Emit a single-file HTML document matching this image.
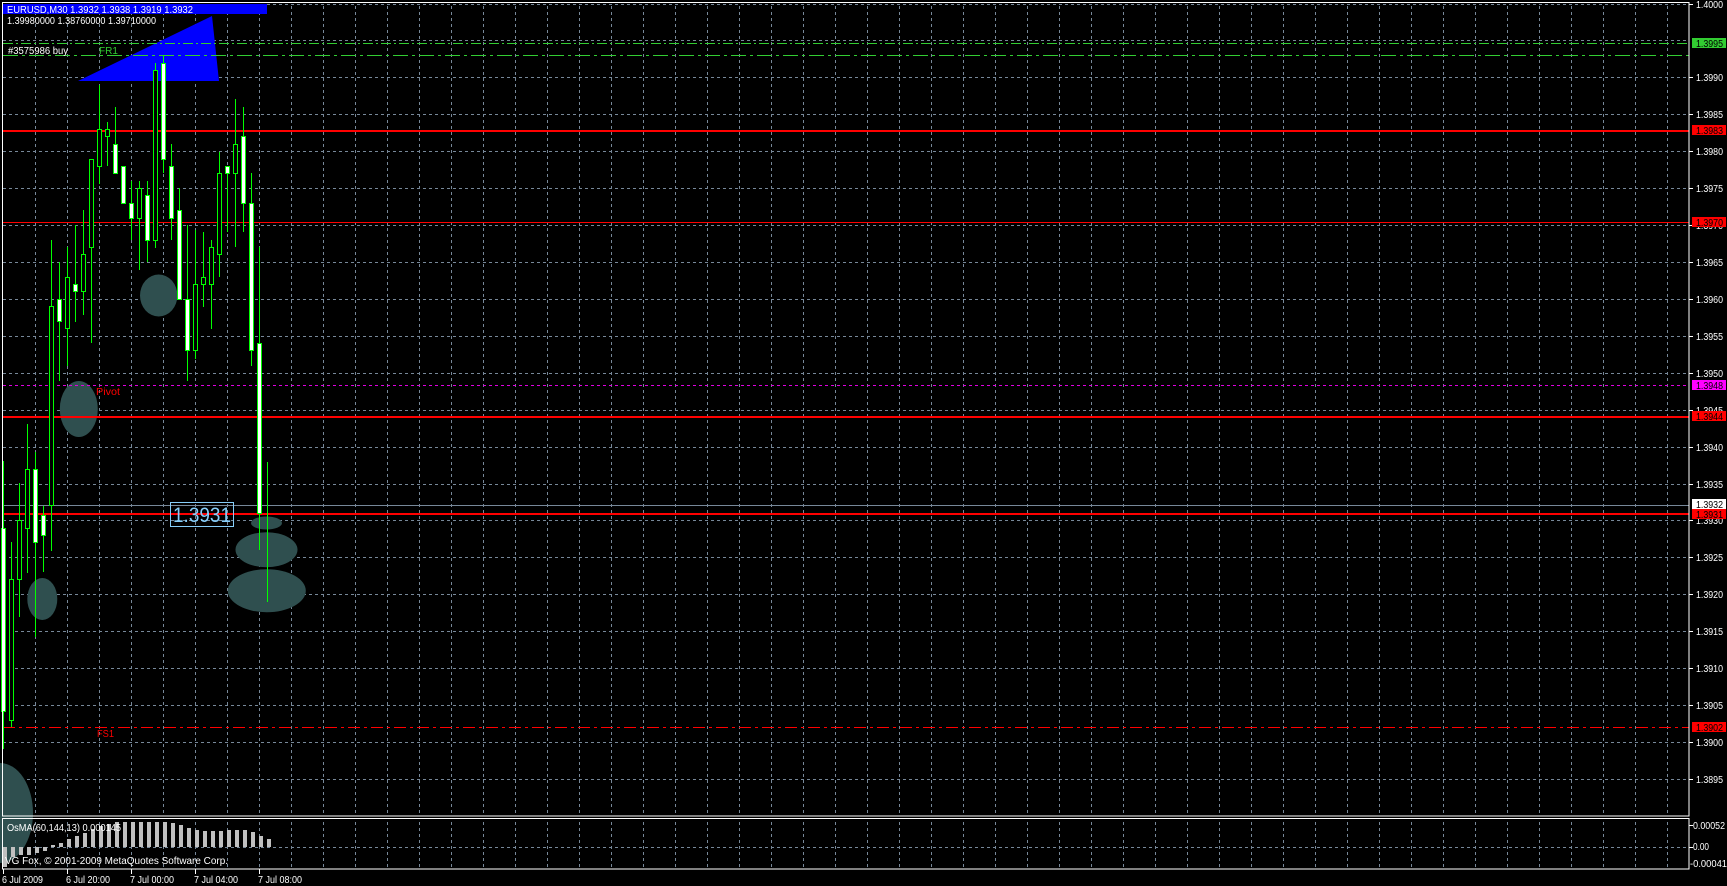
<!DOCTYPE html>
<html><head><meta charset="utf-8"><style>
html,body{margin:0;padding:0;background:#000;overflow:hidden}
svg{display:block}
text{font-family:"Liberation Sans",sans-serif;font-size:10px}
</style></head><body>
<svg width="1727" height="886" viewBox="0 0 1727 886" xmlns="http://www.w3.org/2000/svg">
<defs>
<pattern id="vg" x="3" y="0" width="32" height="6" patternUnits="userSpaceOnUse"><rect x="0" y="0" width="1" height="3" fill="#778899"/></pattern>
</defs>
<rect width="1727" height="886" fill="#000"/>
<!-- vertical grid -->
<rect x="35" y="3" width="1654" height="813" fill="url(#vg)"/>
<rect x="35" y="819" width="1654" height="50" fill="url(#vg)"/>
<!-- horizontal grid -->
<g stroke="#778899" stroke-width="1" stroke-dasharray="3 3">
<line x1="3" x2="1689" y1="4.5" y2="4.5"/><line x1="3" x2="1689" y1="40.5" y2="40.5"/>
<line x1="3" x2="1689" y1="77.5" y2="77.5"/><line x1="3" x2="1689" y1="114.5" y2="114.5"/>
<line x1="3" x2="1689" y1="151.5" y2="151.5"/><line x1="3" x2="1689" y1="188.5" y2="188.5"/>
<line x1="3" x2="1689" y1="225.5" y2="225.5"/><line x1="3" x2="1689" y1="262.5" y2="262.5"/>
<line x1="3" x2="1689" y1="299.5" y2="299.5"/><line x1="3" x2="1689" y1="336.5" y2="336.5"/>
<line x1="3" x2="1689" y1="373.5" y2="373.5"/><line x1="3" x2="1689" y1="410.5" y2="410.5"/>
<line x1="3" x2="1689" y1="447.5" y2="447.5"/><line x1="3" x2="1689" y1="484.5" y2="484.5"/>
<line x1="3" x2="1689" y1="520.5" y2="520.5"/><line x1="3" x2="1689" y1="557.5" y2="557.5"/>
<line x1="3" x2="1689" y1="594.5" y2="594.5"/><line x1="3" x2="1689" y1="631.5" y2="631.5"/>
<line x1="3" x2="1689" y1="668.5" y2="668.5"/><line x1="3" x2="1689" y1="705.5" y2="705.5"/>
<line x1="3" x2="1689" y1="742.5" y2="742.5"/><line x1="3" x2="1689" y1="779.5" y2="779.5"/>
<line x1="3" x2="1689" y1="847.5" y2="847.5"/>
</g>
<!-- ellipses -->
<g fill="#2f4f4f">
<ellipse cx="158.7" cy="295.5" rx="18.7" ry="21"/>
<ellipse cx="78.8" cy="409" rx="19" ry="28"/>
<ellipse cx="42.3" cy="599" rx="15" ry="21"/>
<ellipse cx="266.5" cy="523" rx="15.5" ry="6.5"/>
<ellipse cx="266.5" cy="549.7" rx="31" ry="17.5"/>
<ellipse cx="266.8" cy="590.7" rx="39" ry="21.5"/>
<ellipse cx="0" cy="813" rx="33" ry="50"/>
</g>
<!-- blue objects -->
<polygon points="78,81 212,16 219,81" fill="#0000ff"/>
<rect x="3" y="4" width="264" height="10" fill="#0000ff"/>
<!-- price lines -->
<line x1="3" x2="1689" y1="43.5" y2="43.5" stroke="#32cd32" stroke-dasharray="10 3 2 3"/>
<line x1="3" x2="1689" y1="55.5" y2="55.5" stroke="#32cd32" stroke-dasharray="15 4 3 4"/>
<rect x="3" y="130" width="1686" height="2" fill="#ff0000"/>
<rect x="3" y="222" width="1686" height="1" fill="#ff0000"/>
<line x1="3" x2="1689" y1="385.5" y2="385.5" stroke="#e000e0" stroke-dasharray="3 3"/>
<rect x="3" y="416" width="1686" height="2" fill="#ff0000"/>
<line x1="3" x2="1689" y1="505.5" y2="505.5" stroke="#778899"/>
<rect x="3" y="513" width="1686" height="2" fill="#ff0000"/>
<line x1="3" x2="1689" y1="727.5" y2="727.5" stroke="#ff0000" stroke-dasharray="12 4 3 4"/>
<!-- candles -->
<g stroke="#00ff00" stroke-width="1">
<line x1="3.5" x2="3.5" y1="461" y2="749"/><rect x="1.5" y="528.5" width="4" height="183" fill="#fff"/>
<line x1="11.5" x2="11.5" y1="542" y2="727"/><rect x="9.5" y="579.5" width="4" height="141" fill="#000"/>
<line x1="19.5" x2="19.5" y1="483" y2="617"/><rect x="17.5" y="520.5" width="4" height="59" fill="#000"/>
<line x1="27.5" x2="27.5" y1="424" y2="573"/><rect x="25.5" y="469.5" width="4" height="59" fill="#000"/>
<line x1="35.5" x2="35.5" y1="452" y2="637"/><rect x="33.5" y="469.5" width="4" height="73" fill="#fff"/>
<line x1="43.5" x2="43.5" y1="506" y2="572"/><rect x="41.5" y="515.5" width="4" height="20" fill="#fff"/>
<line x1="51.5" x2="51.5" y1="240" y2="551"/><rect x="49.5" y="306.5" width="4" height="199" fill="#000"/>
<line x1="59.5" x2="59.5" y1="262" y2="381"/><rect x="57.5" y="299.5" width="4" height="22" fill="#fff"/>
<line x1="67.5" x2="67.5" y1="247" y2="366"/><rect x="65.5" y="277.5" width="4" height="51" fill="#000"/>
<line x1="75.5" x2="75.5" y1="225" y2="322"/><rect x="73.5" y="284.5" width="4" height="7" fill="#fff"/>
<line x1="83.5" x2="83.5" y1="210" y2="315"/><rect x="81.5" y="254.5" width="4" height="37" fill="#000"/>
<line x1="91.5" x2="91.5" y1="159" y2="343"/><rect x="89.5" y="159.5" width="4" height="88" fill="#000"/>
<line x1="99.5" x2="99.5" y1="85" y2="184"/><rect x="97.5" y="129.5" width="4" height="37" fill="#000"/>
<line x1="107.5" x2="107.5" y1="122" y2="166"/><rect x="105.5" y="129.5" width="4" height="7" fill="#000"/>
<line x1="115.5" x2="115.5" y1="107" y2="173"/><rect x="113.5" y="144.5" width="4" height="29" fill="#fff"/>
<rect x="121.5" y="166.5" width="4" height="37" fill="#fff"/>
<line x1="131.5" x2="131.5" y1="181" y2="240"/><rect x="129.5" y="203.5" width="4" height="15" fill="#fff"/>
<line x1="139.5" x2="139.5" y1="181" y2="270"/><rect x="137.5" y="188.5" width="4" height="30" fill="#000"/>
<line x1="147.5" x2="147.5" y1="181" y2="262"/><rect x="145.5" y="195.5" width="4" height="45" fill="#fff"/>
<line x1="155.5" x2="155.5" y1="63" y2="248"/><rect x="153.5" y="70.5" width="4" height="170" fill="#000"/>
<line x1="163.5" x2="163.5" y1="55" y2="173"/><rect x="161.5" y="63.5" width="4" height="96" fill="#fff"/>
<line x1="171.5" x2="171.5" y1="144" y2="240"/><rect x="169.5" y="166.5" width="4" height="52" fill="#fff"/>
<line x1="179.5" x2="179.5" y1="188" y2="299"/><rect x="177.5" y="210.5" width="4" height="89" fill="#fff"/>
<line x1="187.5" x2="187.5" y1="225" y2="381"/><rect x="185.5" y="299.5" width="4" height="51" fill="#fff"/>
<line x1="195.5" x2="195.5" y1="230" y2="359"/><rect x="193.5" y="284.5" width="4" height="66" fill="#000"/>
<line x1="203.5" x2="203.5" y1="232" y2="307"/><rect x="201.5" y="277.5" width="4" height="7" fill="#000"/>
<line x1="211.5" x2="211.5" y1="240" y2="329"/><rect x="209.5" y="247.5" width="4" height="37" fill="#000"/>
<line x1="219.5" x2="219.5" y1="152" y2="277"/><rect x="217.5" y="173.5" width="4" height="81" fill="#000"/>
<line x1="227.5" x2="227.5" y1="166" y2="232"/><rect x="225.5" y="166.5" width="4" height="7" fill="#fff"/>
<line x1="235.5" x2="235.5" y1="99" y2="247"/><rect x="233.5" y="144.5" width="4" height="29" fill="#000"/>
<line x1="243.5" x2="243.5" y1="107" y2="232"/><rect x="241.5" y="136.5" width="4" height="67" fill="#fff"/>
<line x1="251.5" x2="251.5" y1="173" y2="366"/><rect x="249.5" y="203.5" width="4" height="147" fill="#fff"/>
<line x1="259.5" x2="259.5" y1="247" y2="550"/><rect x="257.5" y="343.5" width="4" height="170" fill="#fff"/>
<line x1="267.5" x2="267.5" y1="462" y2="602"/>
</g>
<!-- price label box -->
<rect x="170.5" y="502.5" width="63" height="24" fill="none" stroke="#87cefa"/>
<text x="173" y="522" fill="#87cefa" style="font-size:21px" textLength="58" lengthAdjust="spacingAndGlyphs">1.3931</text>
<!-- text labels -->
<text x="7" y="13" fill="#fff" textLength="186" lengthAdjust="spacingAndGlyphs">EURUSD,M30  1.3932 1.3938 1.3919 1.3932</text>
<text x="7" y="24" fill="#fff" textLength="149" lengthAdjust="spacingAndGlyphs">1.39980000 1.38760000 1.39710000</text>
<text x="8" y="54" fill="#fff" textLength="60" lengthAdjust="spacingAndGlyphs">#3575986 buy</text>
<text x="99" y="54" fill="#32cd32" textLength="19" lengthAdjust="spacingAndGlyphs">FR1</text>
<text x="96" y="395" fill="#ff0000" textLength="24" lengthAdjust="spacingAndGlyphs">Pivot</text>
<text x="97" y="737" fill="#ff0000" textLength="17" lengthAdjust="spacingAndGlyphs">FS1</text>
<!-- indicator bars -->
<g fill="#c0c0c0">
<rect x="3" y="847" width="4" height="20"/><rect x="11" y="847" width="4" height="10"/>
<rect x="19" y="847" width="4" height="8"/><rect x="27" y="847" width="4" height="8"/>
<rect x="35" y="847" width="4" height="6"/><rect x="43" y="847" width="4" height="4"/>
<rect x="51" y="845" width="4" height="2"/><rect x="59" y="843" width="4" height="4"/>
<rect x="67" y="839" width="4" height="8"/><rect x="75" y="836" width="4" height="11"/>
<rect x="83" y="833" width="4" height="14"/><rect x="91" y="829" width="4" height="18"/>
<rect x="99" y="826" width="4" height="21"/><rect x="107" y="824" width="4" height="23"/>
<rect x="115" y="822" width="4" height="25"/><rect x="123" y="822" width="4" height="25"/>
<rect x="131" y="822" width="4" height="25"/><rect x="139" y="822" width="4" height="25"/>
<rect x="147" y="822" width="4" height="25"/><rect x="155" y="822" width="4" height="25"/>
<rect x="163" y="822" width="4" height="25"/><rect x="171" y="823" width="4" height="24"/>
<rect x="179" y="825" width="4" height="22"/><rect x="187" y="828" width="4" height="19"/>
<rect x="195" y="830" width="4" height="17"/><rect x="203" y="831" width="4" height="16"/>
<rect x="211" y="831" width="4" height="16"/><rect x="219" y="831" width="4" height="16"/>
<rect x="227" y="830" width="4" height="17"/><rect x="235" y="830" width="4" height="17"/>
<rect x="243" y="830" width="4" height="17"/><rect x="251" y="832" width="4" height="15"/>
<rect x="259" y="836" width="4" height="11"/><rect x="267" y="839" width="4" height="8"/>
</g>
<text x="7" y="831" fill="#fff" textLength="114" lengthAdjust="spacingAndGlyphs">OsMA(60,144,13) 0.000145</text>
<text x="5" y="864" fill="#fff" textLength="223" lengthAdjust="spacingAndGlyphs">VG Fox, © 2001-2009 MetaQuotes Software Corp.</text>
<!-- borders -->
<g stroke="#fff" fill="none" stroke-width="1">
<rect x="2.5" y="2.5" width="1686.5" height="813.5"/>
<rect x="2.5" y="818.5" width="1686.5" height="50.5"/>
</g>
<!-- right axis ticks -->
<g stroke="#fff">
<line x1="1689" x2="1693" y1="4.5" y2="4.5"/><line x1="1689" x2="1693" y1="77.5" y2="77.5"/>
<line x1="1689" x2="1693" y1="114.5" y2="114.5"/><line x1="1689" x2="1693" y1="151.5" y2="151.5"/>
<line x1="1689" x2="1693" y1="188.5" y2="188.5"/><line x1="1689" x2="1693" y1="225.5" y2="225.5"/>
<line x1="1689" x2="1693" y1="262.5" y2="262.5"/><line x1="1689" x2="1693" y1="299.5" y2="299.5"/>
<line x1="1689" x2="1693" y1="336.5" y2="336.5"/><line x1="1689" x2="1693" y1="373.5" y2="373.5"/>
<line x1="1689" x2="1693" y1="410.5" y2="410.5"/><line x1="1689" x2="1693" y1="447.5" y2="447.5"/>
<line x1="1689" x2="1693" y1="484.5" y2="484.5"/><line x1="1689" x2="1693" y1="520.5" y2="520.5"/>
<line x1="1689" x2="1693" y1="557.5" y2="557.5"/><line x1="1689" x2="1693" y1="594.5" y2="594.5"/>
<line x1="1689" x2="1693" y1="631.5" y2="631.5"/><line x1="1689" x2="1693" y1="668.5" y2="668.5"/>
<line x1="1689" x2="1693" y1="705.5" y2="705.5"/><line x1="1689" x2="1693" y1="742.5" y2="742.5"/>
<line x1="1689" x2="1693" y1="779.5" y2="779.5"/>
<line x1="1689" x2="1693" y1="825.5" y2="825.5"/><line x1="1689" x2="1693" y1="847.5" y2="847.5"/>
<line x1="3.5" x2="3.5" y1="869" y2="874"/><line x1="67.5" x2="67.5" y1="869" y2="874"/>
<line x1="131.5" x2="131.5" y1="869" y2="874"/><line x1="195.5" x2="195.5" y1="869" y2="874"/>
<line x1="259.5" x2="259.5" y1="869" y2="874"/>
</g>
<g fill="#fff">
<text x="1696" y="8" textLength="27" lengthAdjust="spacingAndGlyphs">1.4000</text>
<text x="1696" y="81" textLength="27" lengthAdjust="spacingAndGlyphs">1.3990</text>
<text x="1696" y="118" textLength="27" lengthAdjust="spacingAndGlyphs">1.3985</text>
<text x="1696" y="155" textLength="27" lengthAdjust="spacingAndGlyphs">1.3980</text>
<text x="1696" y="192" textLength="27" lengthAdjust="spacingAndGlyphs">1.3975</text>
<text x="1696" y="229" textLength="27" lengthAdjust="spacingAndGlyphs">1.3970</text>
<text x="1696" y="266" textLength="27" lengthAdjust="spacingAndGlyphs">1.3965</text>
<text x="1696" y="303" textLength="27" lengthAdjust="spacingAndGlyphs">1.3960</text>
<text x="1696" y="340" textLength="27" lengthAdjust="spacingAndGlyphs">1.3955</text>
<text x="1696" y="377" textLength="27" lengthAdjust="spacingAndGlyphs">1.3950</text>
<text x="1696" y="414" textLength="27" lengthAdjust="spacingAndGlyphs">1.3945</text>
<text x="1696" y="451" textLength="27" lengthAdjust="spacingAndGlyphs">1.3940</text>
<text x="1696" y="488" textLength="27" lengthAdjust="spacingAndGlyphs">1.3935</text>
<text x="1696" y="524" textLength="27" lengthAdjust="spacingAndGlyphs">1.3930</text>
<text x="1696" y="561" textLength="27" lengthAdjust="spacingAndGlyphs">1.3925</text>
<text x="1696" y="598" textLength="27" lengthAdjust="spacingAndGlyphs">1.3920</text>
<text x="1696" y="635" textLength="27" lengthAdjust="spacingAndGlyphs">1.3915</text>
<text x="1696" y="672" textLength="27" lengthAdjust="spacingAndGlyphs">1.3910</text>
<text x="1696" y="709" textLength="27" lengthAdjust="spacingAndGlyphs">1.3905</text>
<text x="1696" y="746" textLength="27" lengthAdjust="spacingAndGlyphs">1.3900</text>
<text x="1696" y="783" textLength="27" lengthAdjust="spacingAndGlyphs">1.3895</text>
<text x="1693" y="829" textLength="32" lengthAdjust="spacingAndGlyphs">0.00052</text>
<text x="1693" y="850" textLength="16" lengthAdjust="spacingAndGlyphs">0.00</text>
<text x="1690" y="867" textLength="37" lengthAdjust="spacingAndGlyphs">-0.00041</text>
<text x="2" y="883" textLength="41" lengthAdjust="spacingAndGlyphs">6 Jul 2009</text>
<text x="66" y="883" textLength="44" lengthAdjust="spacingAndGlyphs">6 Jul 20:00</text>
<text x="130" y="883" textLength="44" lengthAdjust="spacingAndGlyphs">7 Jul 00:00</text>
<text x="194" y="883" textLength="44" lengthAdjust="spacingAndGlyphs">7 Jul 04:00</text>
<text x="258" y="883" textLength="44" lengthAdjust="spacingAndGlyphs">7 Jul 08:00</text>
</g>
<!-- price boxes -->
<rect x="1692" y="38" width="34" height="10" fill="#32cd32"/>
<text x="1696" y="47" fill="#000" textLength="27" lengthAdjust="spacingAndGlyphs">1.3995</text>
<rect x="1692" y="125" width="34" height="10" fill="#ff0000"/>
<text x="1696" y="134" fill="#000" textLength="27" lengthAdjust="spacingAndGlyphs">1.3983</text>
<rect x="1692" y="217" width="34" height="10" fill="#ff0000"/>
<text x="1696" y="226" fill="#000" textLength="27" lengthAdjust="spacingAndGlyphs">1.3970</text>
<rect x="1692" y="380" width="34" height="10" fill="#ff00ff"/>
<text x="1696" y="389" fill="#000" textLength="27" lengthAdjust="spacingAndGlyphs">1.3948</text>
<rect x="1692" y="411" width="34" height="10" fill="#ff0000"/>
<text x="1696" y="420" fill="#000" textLength="27" lengthAdjust="spacingAndGlyphs">1.3944</text>
<rect x="1692" y="499" width="34" height="10" fill="#ffffff"/>
<text x="1696" y="508" fill="#000" textLength="27" lengthAdjust="spacingAndGlyphs">1.3932</text>
<rect x="1692" y="509" width="34" height="10" fill="#ff0000"/>
<text x="1696" y="518" fill="#000" textLength="27" lengthAdjust="spacingAndGlyphs">1.3931</text>
<rect x="1692" y="722" width="34" height="10" fill="#ff0000"/>
<text x="1696" y="731" fill="#000" textLength="27" lengthAdjust="spacingAndGlyphs">1.3902</text>
</svg>
</body></html>
